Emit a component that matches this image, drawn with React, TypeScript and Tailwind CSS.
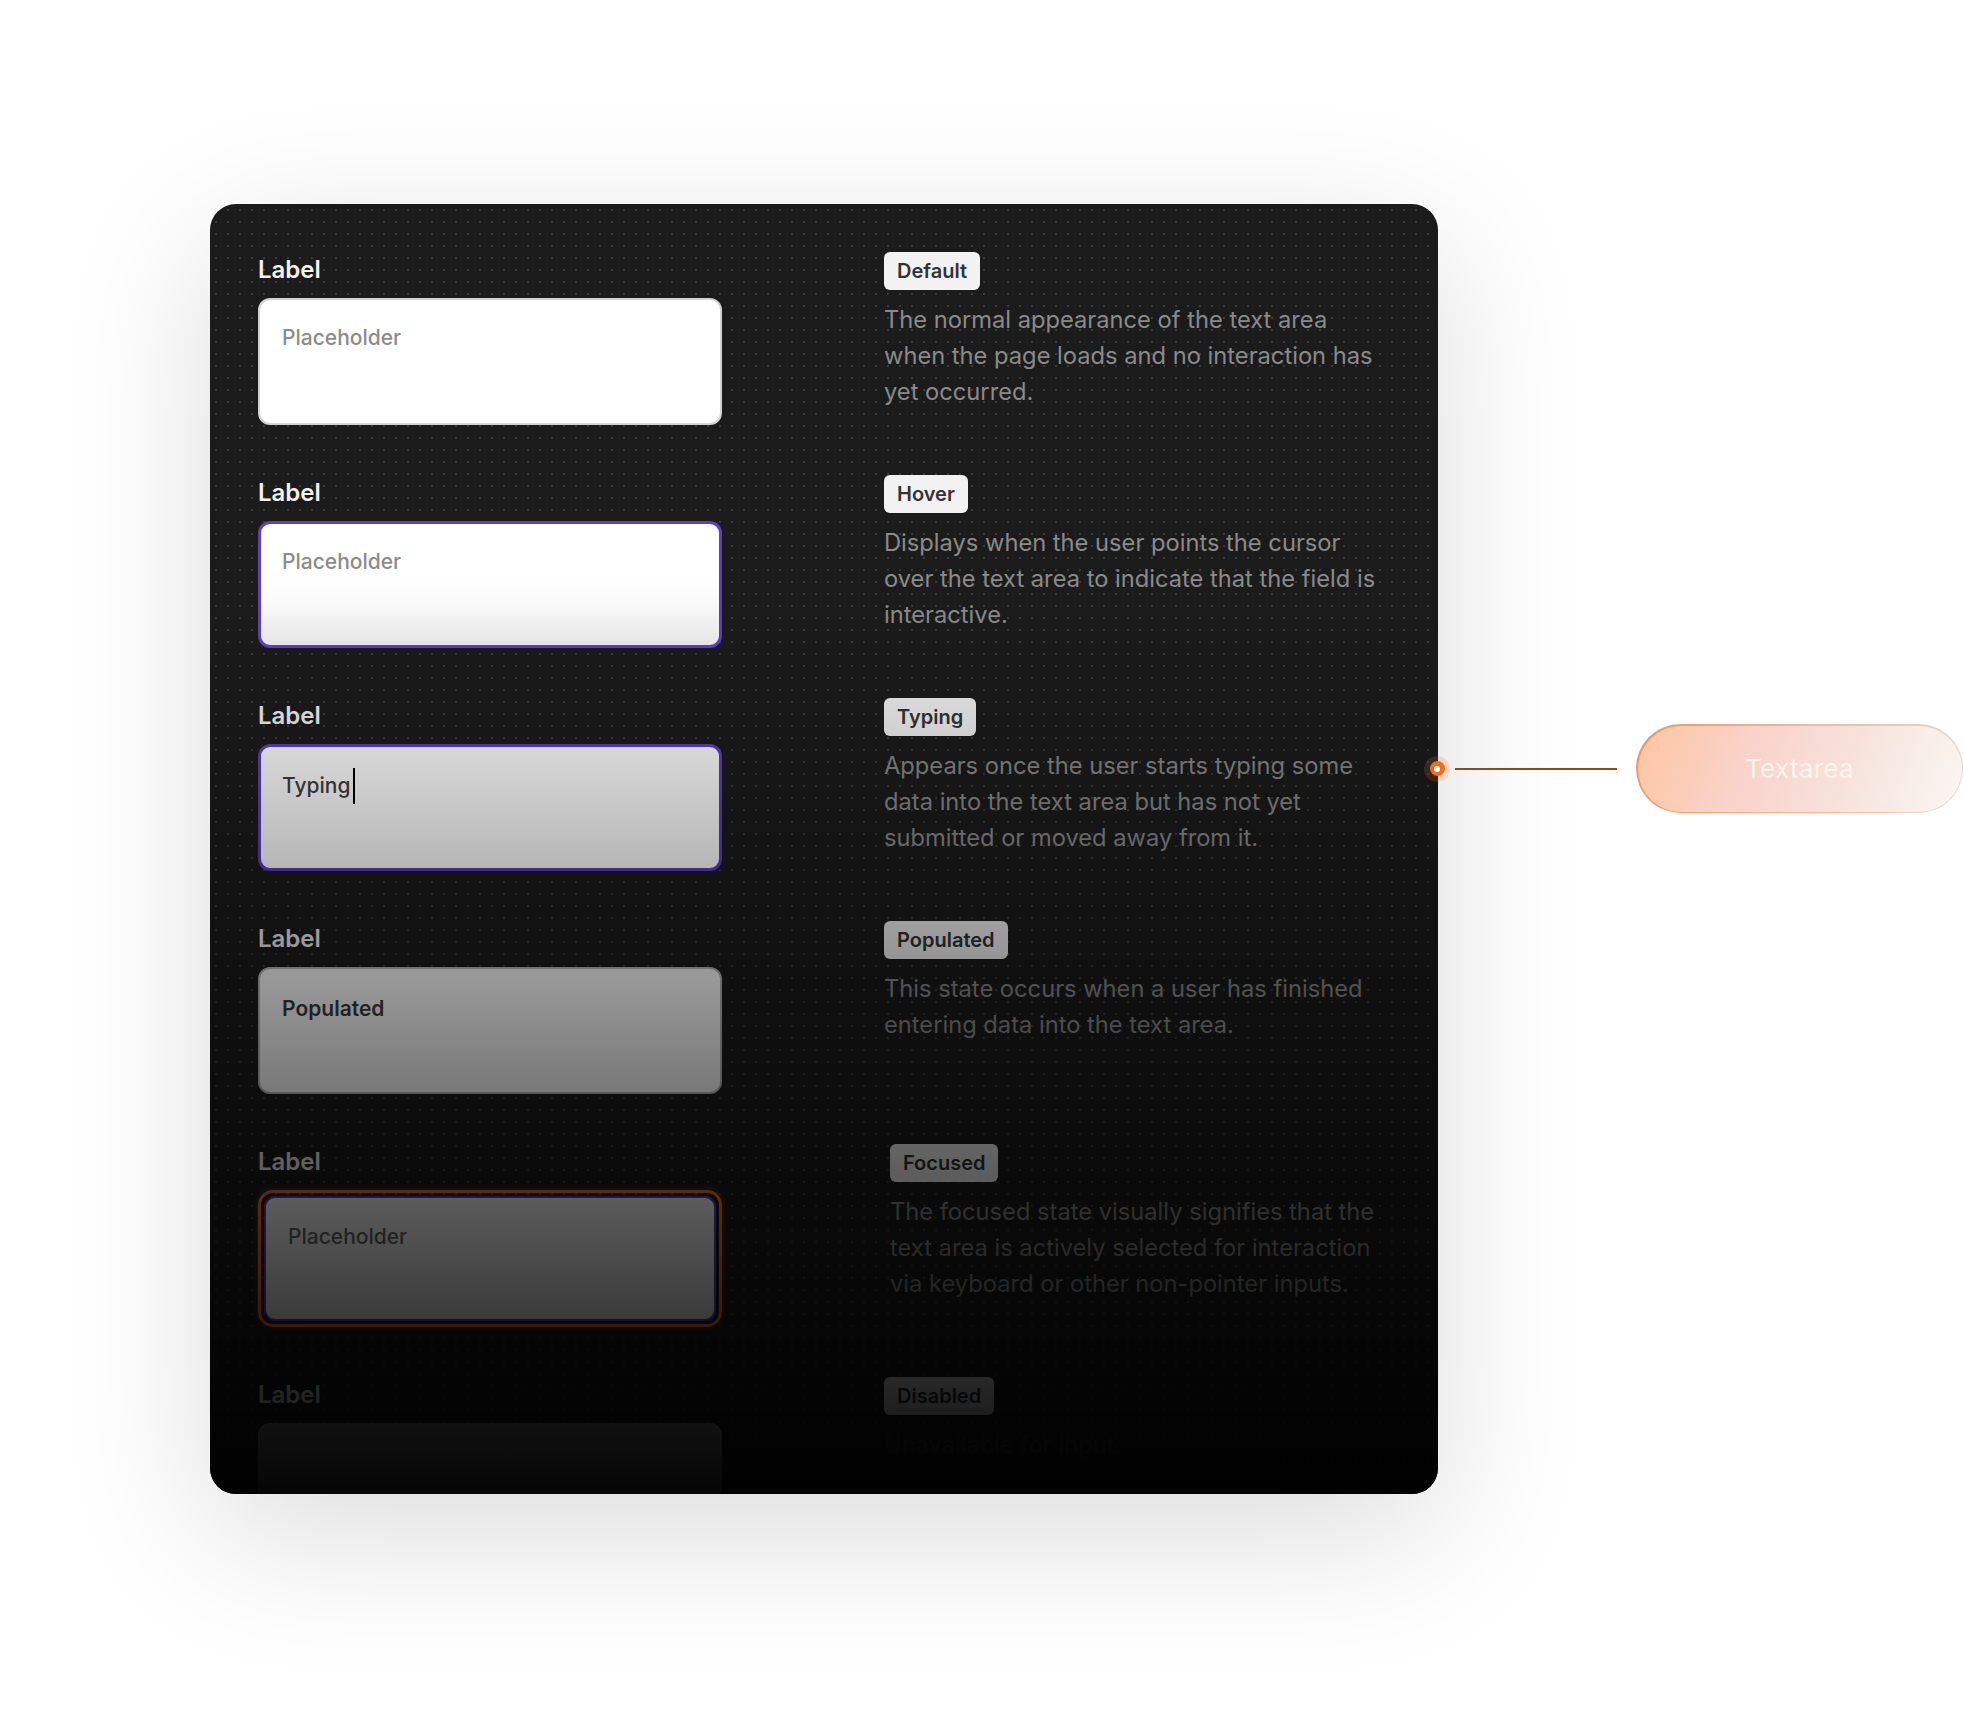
import React from "react";

type Row = {
  state: string;
  text: string;
  kind: "default" | "hover" | "typing" | "populated" | "focused" | "disabled";
};

const rows: Row[] = [
  {
    state: "Default",
    kind: "default",
    text: "The normal appearance of the text area when the page loads and no interaction has yet occurred.",
  },
  {
    state: "Hover",
    kind: "hover",
    text: "Displays when the user points the cursor over the text area to indicate that the field is interactive.",
  },
  {
    state: "Typing",
    kind: "typing",
    text: "Appears once the user starts typing some data into the text area but has not yet submitted or moved away from it.",
  },
  {
    state: "Populated",
    kind: "populated",
    text: "This state occurs when a user has finished entering data into the text area.",
  },
  {
    state: "Focused",
    kind: "focused",
    text: "The focused state visually signifies that the text area is actively selected for interaction via keyboard or other non-pointer inputs.",
  },
  {
    state: "Disabled",
    kind: "disabled",
    text: "Unavailable for input.",
  },
];

function Field({ kind }: { kind: Row["kind"] }) {
  const placeholder = (
    <span className="text-[21px] leading-[28px] font-medium text-[#8a8a8a]">Placeholder</span>
  );

  if (kind === "focused") {
    return (
      <div className="rounded-[15px] border-[3px] border-[#ff7420] p-[3px] shadow-[0_0_6px_rgba(255,116,32,0.35)]">
        <div className="h-[125px] rounded-[11px] border-2 border-[#5b3fc4] bg-white px-[22px] pt-[25px]">
          <span className="text-[21px] leading-[28px] font-medium text-[#6a6a6a]">Placeholder</span>
        </div>
      </div>
    );
  }

  const box = {
    default: "border-2 border-[#d2d2d2] bg-white px-[22px] pt-[24px]",
    hover: "border-[3px] border-[#5b3fc4] bg-[linear-gradient(to_bottom,#ffffff_45%,#f0f0f0_100%)] px-[21px] pt-[24px]",
    typing: "border-[3px] border-[#5b3fc4] bg-white px-[21px] pt-[21px]",
    populated: "border-2 border-[#b8b8b8] bg-white px-[22px] pt-[26px]",
    disabled: "border-2 border-[#9a9a9a] bg-[#8c8c8c] px-[22px] pt-[24px]",
  }[kind];

  return (
    <div className={`h-[127px] rounded-[12px] ${box}`}>
      {kind === "typing" ? (
        <div className="flex items-center">
          <span className="text-[21px] leading-[28px] font-medium text-[#404040]">Typing</span>
          <span className="ml-[3px] h-[36px] w-[2px] bg-black" />
        </div>
      ) : kind === "populated" ? (
        <span className="text-[21px] leading-[28px] font-semibold text-[#3c3c3c]">Populated</span>
      ) : kind === "disabled" ? null : (
        placeholder
      )}
    </div>
  );
}

export default function App() {
  return (
    <div className="w-[1964px] h-[1709px] overflow-hidden bg-white font-['Inter',sans-serif]">
      <div className="flex items-start pt-[204px] pl-[210px]">
        {/* Card */}
        <div className="relative w-[1228px] h-[1290px] shrink-0 overflow-hidden rounded-[26px] bg-[#1b1b1b] shadow-[0_40px_150px_rgba(0,0,0,0.14)]">
          <div className="absolute inset-0 bg-[radial-gradient(circle,#3b3b3b_1px,transparent_1.3px)] bg-[size:12px_12px]" />

          <div className="relative flex flex-col gap-[50px] pt-[48px] pl-[48px]">
            {rows.map((row) => (
              <div key={row.state} className="grid grid-cols-[464px_510px] gap-x-[162px]">
                <div className="pt-[4px]">
                  <p className="text-[24px] leading-[28px] font-semibold text-[#f2f2f2]">Label</p>
                  <div className="mt-[14px]">
                    <Field kind={row.kind} />
                  </div>
                </div>
                <div className={row.kind === "focused" ? "pl-[6px]" : ""}>
                  <span className="inline-block h-[38px] rounded-[6px] bg-[#f2f2f2] px-[13px] text-[20px] leading-[38px] font-semibold text-[#333333]">
                    {row.state}
                  </span>
                  <p
                    className={`mt-[12px] text-[23.7px] leading-[36px] ${
                      row.kind === "disabled" ? "text-[#3a3a3a]" : "text-[#8a8a8a]"
                    }`}
                  >
                    {row.text}
                  </p>
                </div>
              </div>
            ))}
          </div>

          {/* fade toward the bottom */}
          <div className="pointer-events-none absolute inset-0 bg-[linear-gradient(to_bottom,transparent_31%,rgba(0,0,0,0.96)_100%)]" />
        </div>

        {/* Connector */}
        <div className="relative z-10 mt-[520px] -ml-[14px] flex h-[89px] items-center">
          <div className="flex h-[26px] w-[26px] items-center justify-center rounded-full bg-[rgba(242,106,27,0.18)]">
            <div className="flex h-[15px] w-[15px] items-center justify-center rounded-full bg-[#f26a1b]">
              <div className="h-[6px] w-[6px] rounded-full bg-white" />
            </div>
          </div>
          <div className="ml-[5px] h-[2px] w-[162px] bg-[#8c4a1f]" />
          <div className="ml-[19px] h-[89px] w-[327px] shrink-0 rounded-full bg-[linear-gradient(100deg,#f1955e_0%,#eeb89a_50%,#e9d8cd_100%)] p-[1.5px]">
            <div className="flex h-full w-full items-center justify-center rounded-full bg-[linear-gradient(110deg,#fdc6a2_0%,#f9d3cc_35%,#f6e3dc_65%,#faf7f4_100%)]">
              <span className="text-[26px] font-normal tracking-[0.3px] text-[#fff4ec]">Textarea</span>
            </div>
          </div>
        </div>
      </div>
    </div>
  );
}
